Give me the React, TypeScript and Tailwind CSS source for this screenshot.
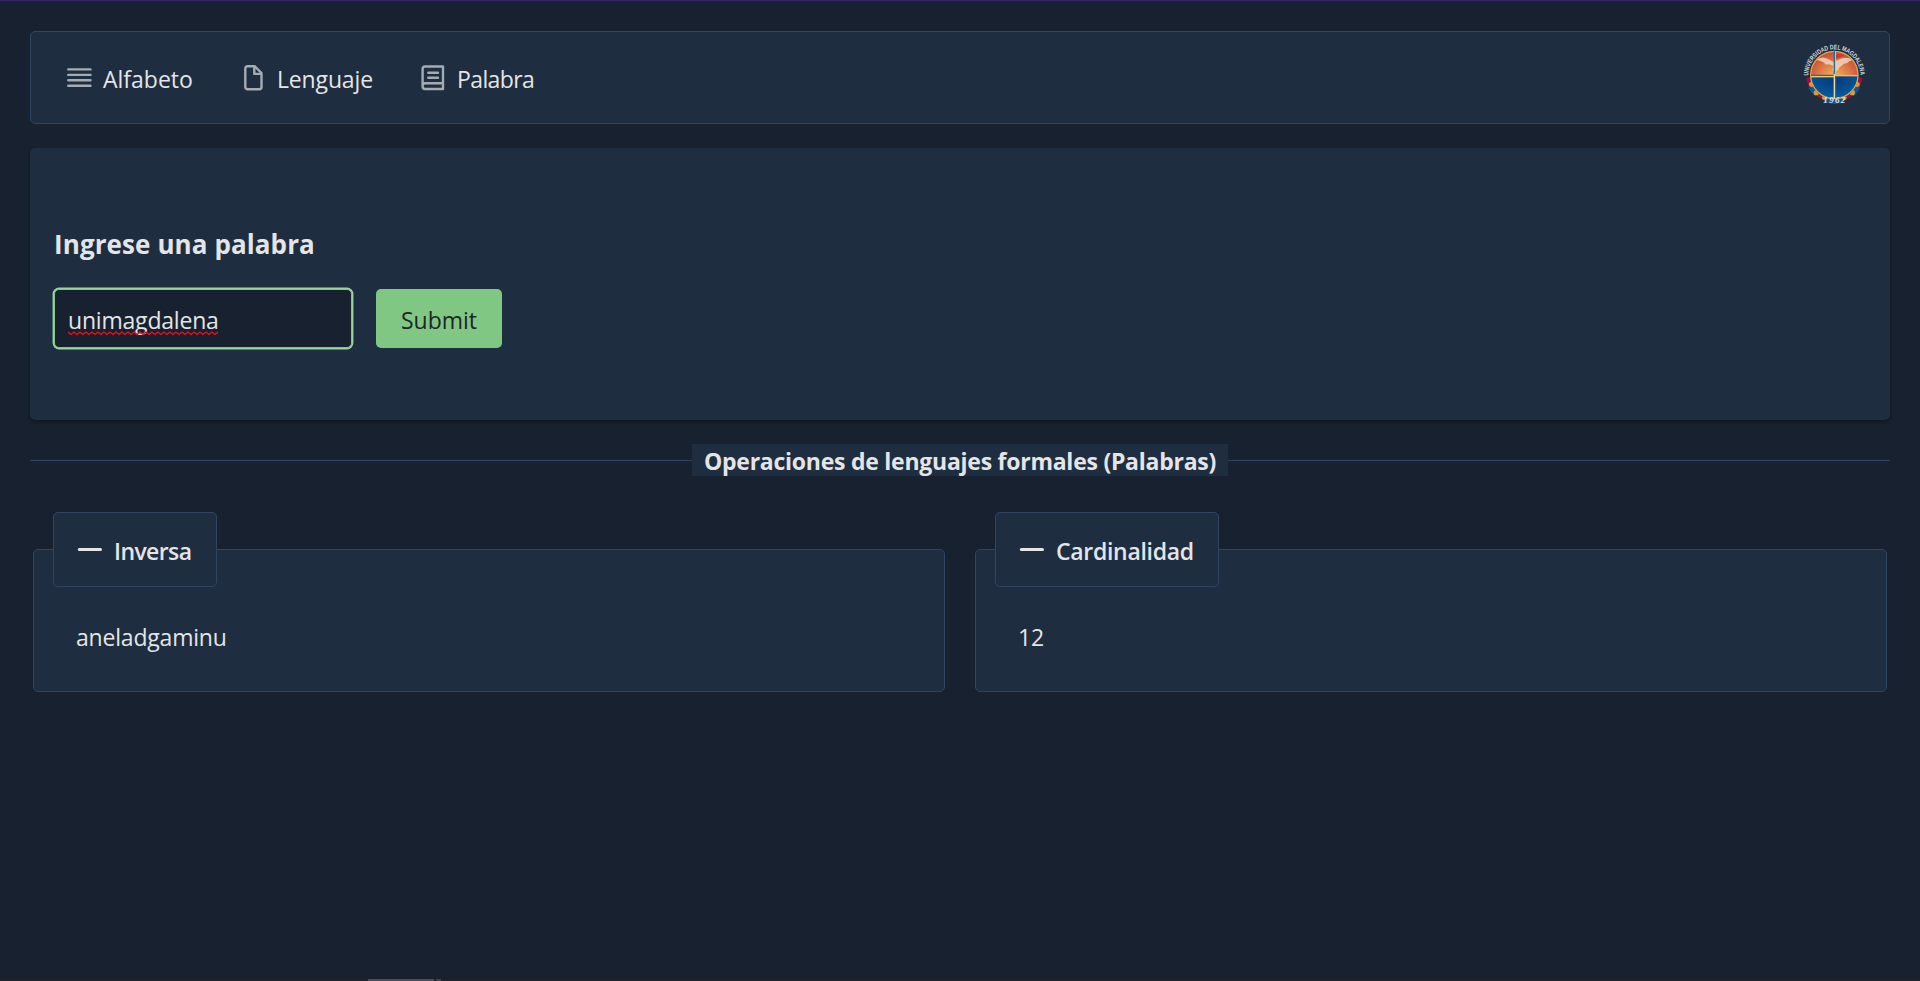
import React from "react";

function AlignJustifyIcon() {
  return (
    <svg width="26" height="26" viewBox="0 0 26 26" fill="none" stroke="currentColor" strokeWidth="2.4" strokeLinecap="round">
      <path d="M2.300 4.400h22.200M2.300 9.900h22.200M2.300 15.300h22.200M2.300 20.700h22.200" />
    </svg>
  );
}

function FileIcon() {
  return (
    <svg width="26" height="26" viewBox="0 0 26 26" fill="none" stroke="currentColor" strokeWidth="2.4" strokeLinejoin="round">
      <path d="M7.500 1.300h7.300l6.700 6.700v14a2.200 2.200 0 0 1-2.200 2.200H7.500a2.200 2.200 0 0 1-2.200-2.200V3.500a2.200 2.200 0 0 1 2.200-2.200z" />
      <path d="M14.300 1.600v7.300h7" />
    </svg>
  );
}

function BookIcon() {
  return (
    <svg width="26" height="26" viewBox="0 0 26 26" fill="none" stroke="currentColor" strokeWidth="2.400" strokeLinejoin="round" strokeLinecap="round">
      <path d="M23 18.200V1.500H5.200A2.600 2.600 0 0 0 2.600 4.100V21.400a2.600 2.600 0 0 0 2.600 2.600H23v-5.800H5.200a2.600 2.600 0 0 0-2.600 2.600" />
      <path d="M8.300 7.800h9.700M8.300 12.800h9.700" />
    </svg>
  );
}

function MinusIcon() {
  return (
    <svg width="25" height="25" viewBox="0 0 25 25" fill="none" stroke="currentColor" strokeWidth="3" strokeLinecap="round">
      <path d="M2.300 12.500h21.200" />
    </svg>
  );
}

function UniversityLogo() {
  return (
    <svg width="68" height="68" viewBox="0 6 204 204">
      <defs>
        <radialGradient id="sun" cx="0.5" cy="0.6" r="0.55">
          <stop offset="0" stopColor="#f6bb5c" />
          <stop offset="0.5" stopColor="#e58a4a" />
          <stop offset="1" stopColor="#cb543c" />
        </radialGradient>
        <radialGradient id="sea" cx="0.5" cy="0.2" r="0.8">
          <stop offset="0" stopColor="#093a78" />
          <stop offset="1" stopColor="#0561a8" />
        </radialGradient>
        <path id="arc" d="M25 113A78 79 0 0 1 181 113" />
      </defs>
      <g fill="none" strokeWidth="15">
        <path d="M26 119A78 78 0 0 0 180 119" stroke="#a00f3c" />
        <path d="M32 146A78 78 0 0 0 50 169M174 146A78 78 0 0 1 156 169M75 185A78 78 0 0 0 131 185" stroke="#0b5799" />
      </g>
      <g fill="#d99a38">
        <circle cx="35" cy="139" r="8" />
        <circle cx="49" cy="164" r="8" />
        <circle cx="73" cy="179" r="7" />
        <circle cx="171" cy="139" r="8" />
        <circle cx="157" cy="164" r="8" />
        <circle cx="133" cy="179" r="7" />
      </g>
      <circle cx="103" cy="111" r="71" fill="url(#sun)" />
      <path d="M32 114a71 71 0 0 0 142 0z" fill="url(#sea)" />
      <path d="M48 66Q66 52 84 63L101 72L122 62Q142 55 158 66Q146 68 141 76Q130 75 124 84Q117 87 113 97Q105 104 97 96L101 84Q88 77 78 80Q68 68 48 66z" fill="#f2cdb9" opacity="0.9" />
      <path d="M104 52Q119 44 133 52Q120 61 104 62z" fill="#c33f35" />
      <circle cx="103" cy="111" r="71" fill="none" stroke="#dda546" strokeWidth="4" />
      <path d="M33 116H102" stroke="#eacb76" strokeWidth="4" />
      <path d="M104 113H173" stroke="#e9bd62" strokeWidth="4" />
      <path d="M33 112H102M103 30V112" stroke="#1670a0" strokeWidth="4" />
      <path d="M103 108V182" stroke="#eadba0" strokeWidth="4" />
      <path d="M106.500 40V108" stroke="#f0c05f" strokeWidth="3" />
      <path d="M107 118V178" stroke="#1477ae" strokeWidth="3" />
      <text fill="#cfd6de" fontFamily="Liberation Sans, sans-serif" fontSize="20" fontWeight="700">
        <textPath href="#arc" textLength="245" lengthAdjust="spacingAndGlyphs">UNIVERSIDAD DEL MAGDALENA</textPath>
      </text>
      <text x="103" y="194" textAnchor="middle" fill="#dde4ea" fontFamily="Liberation Serif, serif" fontSize="27" fontStyle="italic" fontWeight="700" textLength="66">1962</text>
    </svg>
  );
}

const wave = "M0 1" + "l3 2.500l3 -2.500".repeat(25);

function Squiggle() {
  return (
    <svg className="absolute left-[14px] top-[42px]" width="150" height="5" viewBox="0 0 150 5" fill="none" stroke="#f00a14" strokeWidth="1.500" strokeLinejoin="round">
      <path d={wave} />
    </svg>
  );
}

const menu = [
  { label: "Alfabeto", icon: <AlignJustifyIcon />, box: "w-[174px]", track: "tracking-normal" },
  { label: "Lenguaje", icon: <FileIcon />, box: "w-[180px]", track: "tracking-[-0.150px]" },
  { label: "Palabra", icon: <BookIcon />, box: "w-[161px]", track: "tracking-[-0.600px]" },
];

function Fieldset({ title, value, legend, track }: { title: string; value: string; legend: string; track: string }) {
  return (
    <section className="h-[181px] w-[912px]">
      <div className="mt-[37px] flex h-[143px] flex-col items-start rounded-[5px] border border-[#304562] bg-[#1f2d40] pl-[19px]">
        <div className={`-mt-[38px] flex h-[75px] shrink-0 items-center rounded-[5px] border border-[#304562] bg-[#1f2d40] pl-[23px] font-semibold ${legend}`}>
          <MinusIcon />
          <span className={`ml-3 pt-[3px] ${track}`}>{title}</span>
        </div>
        <p className="mt-[33px] pl-[23px] leading-[34px] tracking-[-0.200px]">{value}</p>
      </div>
    </section>
  );
}

export default function App() {
  return (
    <div className="flex h-[981px] w-[1920px] flex-col overflow-hidden bg-[#17212f] font-['Open_Sans','Noto_Sans',sans-serif] text-[23px] text-[#e4e5e7]">
      <div className="h-px shrink-0 bg-[#34256b]" />
      <header className="mx-[30px] mt-[30px] flex h-[93px] shrink-0 items-center justify-between rounded-[5px] border border-[#304562] bg-[#1f2d40] pl-[35px] pr-[21px]">
        <nav className="flex">
          {menu.map((m) => (
            <a key={m.label} className={`flex items-center ${m.box}`}>
              <span className="text-[#a5abb3]">{m.icon}</span>
              <span className={`ml-[11px] pt-[3px] leading-[34px] ${m.track}`}>{m.label}</span>
            </a>
          ))}
        </nav>
        <div className="-mt-[7px]">
          <UniversityLogo />
        </div>
      </header>

      <main className="mx-[30px] mt-6 flex h-[272px] shrink-0 flex-col rounded-[5px] bg-[#1f2d40] pl-6 pt-[76px] shadow-[0_2px_3px_rgba(0,0,0,0.35)]">
        <h5 className="text-[26px] font-bold leading-10 tracking-[0.100px]">Ingrese una palabra</h5>
        <form className="mt-[25px] flex items-center gap-6" onSubmit={(e) => e.preventDefault()}>
          <div className="relative h-[59px] w-[298px]">
            <input
              defaultValue="unimagdalena"
              spellCheck={false}
              className="h-full w-full rounded-[5px] border border-[#81c784] bg-[#17212f] pl-[13px] pt-[3px] tracking-[-0.200px] shadow-[0_0_0_1.400px_#9cd49f] outline-none"
            />
            <Squiggle />
          </div>
          <button className="h-[59px] w-[126px] rounded-[5px] bg-[#81c784] pt-[3px] text-[#212529]">Submit</button>
        </form>
      </main>

      <div className="mx-[30px] mt-6 flex h-8 shrink-0 items-center">
        <div className="h-px flex-1 bg-[#304562]" />
        <div className="flex h-8 w-[536px] items-center justify-center bg-[#1f2d40] pt-[3px] font-bold tracking-[-0.250px]">
          <span className="whitespace-nowrap">Operaciones de lenguajes formales (Palabras)</span>
        </div>
        <div className="h-px flex-1 bg-[#304562]" />
      </div>

      <div className="mx-[33px] mt-9 flex justify-between">
        <Fieldset title="Inversa" value="aneladgaminu" legend="w-[164px]" track="tracking-[-0.600px]" />
        <Fieldset title="Cardinalidad" value="12" legend="w-[224px]" track="tracking-[-0.300px]" />
      </div>

      <footer className="mt-auto flex h-[2px] shrink-0 gap-[2px] bg-[#222127] pl-[368px]">
        <div className="w-[66px] bg-[#4e4d52]" />
        <div className="w-[5px] bg-[#434247]" />
      </footer>
    </div>
  );
}
